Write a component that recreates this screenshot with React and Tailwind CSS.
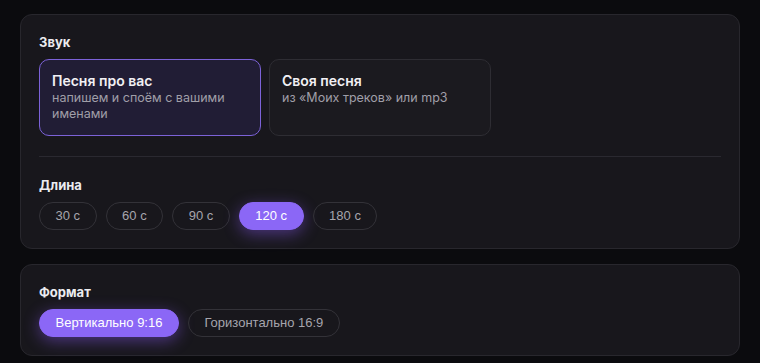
import React, { useState } from 'react';

const sounds = [
  { id: 'custom', title: 'Песня про вас', desc: 'напишем и споём с вашими именами' },
  { id: 'own', title: 'Своя песня', desc: 'из «Моих треков» или mp3' },
];

const lengths = [30, 60, 90, 120, 180];
const formats = ['Вертикально 9:16', 'Горизонтально 16:9'];

const Pill = ({ active, children, onClick }) => (
  <button
    onClick={onClick}
    className={`h-[28px] px-[15.5px] rounded-full text-[13px] font-['Liberation_Sans',Arial,sans-serif] border ${
      active
        ? 'bg-[#8b67f6] border-[#8b67f6] text-white shadow-[0_4px_16px_rgba(139,92,246,0.45)]'
        : 'bg-transparent border-[#333238] text-[#a6a5ad]'
    }`}
  >
    {children}
  </button>
);

const Heading = ({ children }) => (
  <div className="text-[13px] leading-[18px] font-bold text-[#ececf0] mb-2">{children}</div>
);

export default function App() {
  const [sound, setSound] = useState('custom');
  const [len, setLen] = useState(120);
  const [format, setFormat] = useState(formats[0]);

  return (
    <div className="min-h-screen bg-[#0b0b0e] px-5 pt-[14px] pb-2 font-['Inter',sans-serif]">
      <div className="flex flex-col gap-[15px]">
        <section className="bg-[#18171c] border border-[#28272d] rounded-xl px-[18px] pt-[18px] pb-[18px]">
          <Heading>Звук</Heading>
          <div className="flex gap-2">
            {sounds.map((s) => {
              const active = sound === s.id;
              return (
                <div
                  key={s.id}
                  onClick={() => setSound(s.id)}
                  className={`w-[222px] h-[77px] rounded-[10px] border px-3 pt-3 cursor-pointer ${
                    active ? 'bg-[#211d35] border-[#7c62d8]' : 'bg-[#1b1a1f] border-[#2e2d33]'
                  }`}
                >
                  <div className="text-[14px] leading-[18px] font-semibold text-[#f1f0f4]">{s.title}</div>
                  <div className="text-[12.5px] leading-[16px] text-[#a09fa8]">{s.desc}</div>
                </div>
              );
            })}
          </div>
          <div className="h-px bg-[#2a2930] mt-5 mb-[19px]" />
          <Heading>Длина</Heading>
          <div className="flex gap-[9px]">
            {lengths.map((l) => (
              <Pill key={l} active={len === l} onClick={() => setLen(l)}>
                {l} с
              </Pill>
            ))}
          </div>
        </section>

        <section className="bg-[#18171c] border border-[#28272d] rounded-xl px-[18px] pt-[18px] pb-[18px]">
          <Heading>Формат</Heading>
          <div className="flex gap-[9px]">
            {formats.map((f) => (
              <Pill key={f} active={format === f} onClick={() => setFormat(f)}>
                {f}
              </Pill>
            ))}
          </div>
        </section>
      </div>
    </div>
  );
}
